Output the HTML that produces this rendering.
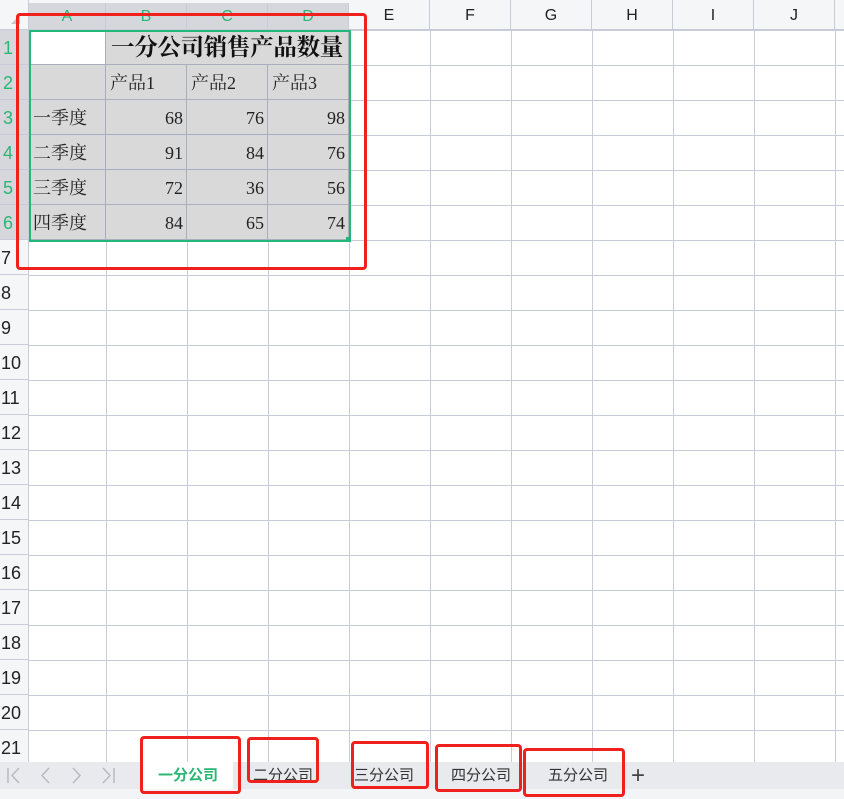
<!DOCTYPE html>
<html><head><meta charset="utf-8"><style>
body{margin:0;width:844px;height:799px;overflow:hidden;background:#fff;position:relative;font-family:"Liberation Sans","Noto Sans CJK SC",sans-serif}
.a{position:absolute}
.grid{left:29px;top:30px;width:815px;height:732px;
background-image:linear-gradient(to right,#c8ccd8 1px,transparent 1px),linear-gradient(to bottom,#c8ccd8 1px,transparent 1px);
background-size:81px 35px,81px 35px;background-position:-4px 0,0 0}
.ch{top:0;height:30px;line-height:32px;text-align:center;font-size:16px;color:#222;border-right:1px solid #c8ccd8;box-sizing:border-box;background:#f5f6f8;border-bottom:1px solid #c8ccd8}
.ch.s{background:#d5d7dd;color:#2bb673;top:3px;height:27px;line-height:27px}
.rh{left:0;width:29px;height:35px;line-height:36px;text-align:left;padding-left:1px;box-sizing:border-box;font-size:18px;color:#222;background:#f5f6f8;border-bottom:1px solid #c8ccd8;border-right:1px solid #c8ccd8}
.rh.s{background:#d5d7dd;color:#2bb673;padding-left:3px}
.c{height:35px;line-height:36px;font-family:"Liberation Serif","Noto Serif CJK SC",serif;font-size:18px;color:#222;box-sizing:border-box;border-right:1px solid #a9adbd;border-bottom:1px solid #a9adbd;background:#d9d9d9}
.n{text-align:right;padding-right:3px}
.l{padding-left:4px}
.red{border:3px solid #f0201c;border-radius:4px;box-sizing:border-box}
.tab{top:762px;height:27px;line-height:27px;font-size:15px;color:#333}
</style></head><body>
<div class="a grid"></div>
<div class="a" style="left:0;top:0;width:29px;height:30px;background:#f5f6f8;border-right:1px solid #c8ccd8;border-bottom:1px solid #c8ccd8;box-sizing:border-box"></div>
<div class="a" style="left:11px;top:15px;width:0;height:0;border-left:9px solid transparent;border-bottom:9px solid #c4c6cc"></div>
<div class="a" style="left:29px;top:0;width:320px;height:3px;background:#f5f6f8"></div>
<div class="a ch s" style="left:29px;width:77px">A</div>
<div class="a ch s" style="left:106px;width:81px">B</div>
<div class="a ch s" style="left:187px;width:81px">C</div>
<div class="a ch s" style="left:268px;width:81px">D</div>
<div class="a ch" style="left:349px;width:81px">E</div>
<div class="a ch" style="left:430px;width:81px">F</div>
<div class="a ch" style="left:511px;width:81px">G</div>
<div class="a ch" style="left:592px;width:81px">H</div>
<div class="a ch" style="left:673px;width:81px">I</div>
<div class="a ch" style="left:754px;width:81px">J</div>
<div class="a ch" style="left:835px;width:20px"></div>
<div class="a rh s" style="top:30px">1</div>
<div class="a rh s" style="top:65px">2</div>
<div class="a rh s" style="top:100px">3</div>
<div class="a rh s" style="top:135px">4</div>
<div class="a rh s" style="top:170px">5</div>
<div class="a rh s" style="top:205px">6</div>
<div class="a rh" style="top:240px">7</div>
<div class="a rh" style="top:275px">8</div>
<div class="a rh" style="top:310px">9</div>
<div class="a rh" style="top:345px">10</div>
<div class="a rh" style="top:380px">11</div>
<div class="a rh" style="top:415px">12</div>
<div class="a rh" style="top:450px">13</div>
<div class="a rh" style="top:485px">14</div>
<div class="a rh" style="top:520px">15</div>
<div class="a rh" style="top:555px">16</div>
<div class="a rh" style="top:590px">17</div>
<div class="a rh" style="top:625px">18</div>
<div class="a rh" style="top:660px">19</div>
<div class="a rh" style="top:695px">20</div>
<div class="a rh" style="top:730px">21</div>

<div class="a c" style="left:29px;top:30px;width:77px;background:#fff"></div>
<div class="a c" style="left:106px;top:30px;width:243px;font-size:23.5px;font-weight:bold;padding-left:5px;color:#111;white-space:nowrap;overflow:hidden;letter-spacing:-0.3px">一分公司销售产品数量</div>
<div class="a c" style="left:29px;top:65px;width:77px"></div>
<div class="a c l" style="left:106px;top:65px;width:81px">产品1</div>
<div class="a c l" style="left:187px;top:65px;width:81px">产品2</div>
<div class="a c l" style="left:268px;top:65px;width:81px">产品3</div>

<div class="a c l" style="left:29px;top:100px;width:77px">一季度</div>
<div class="a c n" style="left:106px;top:100px;width:81px">68</div>
<div class="a c n" style="left:187px;top:100px;width:81px">76</div>
<div class="a c n" style="left:268px;top:100px;width:81px">98</div>
<div class="a c l" style="left:29px;top:135px;width:77px">二季度</div>
<div class="a c n" style="left:106px;top:135px;width:81px">91</div>
<div class="a c n" style="left:187px;top:135px;width:81px">84</div>
<div class="a c n" style="left:268px;top:135px;width:81px">76</div>
<div class="a c l" style="left:29px;top:170px;width:77px">三季度</div>
<div class="a c n" style="left:106px;top:170px;width:81px">72</div>
<div class="a c n" style="left:187px;top:170px;width:81px">36</div>
<div class="a c n" style="left:268px;top:170px;width:81px">56</div>
<div class="a c l" style="left:29px;top:205px;width:77px">四季度</div>
<div class="a c n" style="left:106px;top:205px;width:81px">84</div>
<div class="a c n" style="left:187px;top:205px;width:81px">65</div>
<div class="a c n" style="left:268px;top:205px;width:81px">74</div>

<div class="a" style="left:29px;top:30px;width:322px;height:212px;border:2px solid #21b87a;box-sizing:border-box"></div>
<div class="a" style="left:346px;top:237px;width:5px;height:5px;background:#21b87a"></div>
<div class="a red" style="left:16px;top:13px;width:351px;height:257px"></div>

<div class="a" style="left:0;top:762px;width:844px;height:27px;background:#e9eaee;border-bottom:1px solid #d8d9de"></div>
<div class="a" style="left:0;top:789px;width:844px;height:10px;background:#f3f4f6"></div>
<svg class="a" style="left:0;top:762px" width="130" height="27" fill="none" stroke="#b8bac0" stroke-width="1.5">
<path d="M8 6v15M19 6l-7 7.5 7 7.5"/>
<path d="M49 6l-7 7.5 7 7.5"/>
<path d="M73 6l7 7.5-7 7.5"/>
<path d="M103 6l7 7.5-7 7.5M114 6v15"/>
</svg>
<div class="a tab" style="left:143px;width:90px;background:#fff;text-align:center;color:#2bb673;font-weight:bold">一分公司</div>
<div class="a tab" style="left:253px">二分公司</div>
<div class="a tab" style="left:354px">三分公司</div>
<div class="a tab" style="left:451px">四分公司</div>
<div class="a tab" style="left:548px">五分公司</div>
<div class="a tab" style="left:631px;font-size:24px;color:#444;font-weight:300">+</div>
<div class="a red" style="left:140px;top:736px;width:101px;height:58px"></div>
<div class="a red" style="left:247px;top:737px;width:72px;height:46px"></div>
<div class="a red" style="left:351px;top:741px;width:78px;height:48px"></div>
<div class="a red" style="left:435px;top:744px;width:87px;height:48px"></div>
<div class="a red" style="left:523px;top:748px;width:102px;height:49px"></div>
</body></html>
